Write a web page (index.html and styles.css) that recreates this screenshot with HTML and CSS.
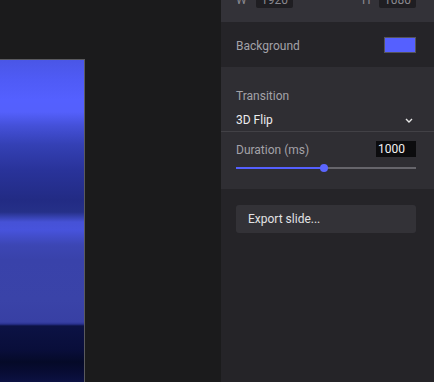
FILE: index.html
```html
<!DOCTYPE html>
<html>
<head>
<meta charset="utf-8">
<link rel="stylesheet" href="styles.css">
</head>
<body>
<div class="app">
  <div class="canvas">
    <div class="slide"></div>
  </div>
  <aside class="panel">
    <section class="size">
      <div class="size-row">
        <span class="dim-label">W</span>
        <span class="dim-field">1920</span>
        <span class="spacer"></span>
        <span class="dim-label dim-h">H</span>
        <span class="dim-field">1080</span>
      </div>
    </section>
    <section class="bg-row">
      <span class="label">Background</span>
      <span class="swatch"></span>
    </section>
    <section class="transition">
      <div class="trans-top">
        <div class="label">Transition</div>
        <div class="select">
          <span>3D Flip</span>
          <svg class="chev" width="8" height="5" viewBox="0 0 8 5"><path d="M1 1 L4 4 L7 1" fill="none" stroke="#e6e6e6" stroke-width="1.4"/></svg>
        </div>
      </div>
      <div class="trans-bottom">
        <div class="dur-row">
          <span class="label">Duration (ms)</span>
          <span class="num">1000</span>
        </div>
        <div class="slider">
          <div class="fill" style="width: 49%"></div>
          <div class="thumb" style="left: 49%"></div>
        </div>
      </div>
    </section>
    <div class="actions">
      <button class="export">Export slide...</button>
    </div>
  </aside>
</div>
</body>
</html>
```
FILE: styles.css
```css
html, body {
  margin: 0;
  padding: 0;
  background: #1b1b1c;
  font-family: Roboto, "Liberation Sans", sans-serif;
  font-size: 12px;
}
.app {
  display: flex;
  width: 434px;
  height: 382px;
  overflow: hidden;
}
.canvas {
  width: 221px;
  flex: none;
  padding-top: 59px;
  box-sizing: border-box;
  background: #1b1b1c;
}
.slide {
  width: 84px;
  height: 323px;
  border-top: 1px solid #5a5a5e;
  border-right: 1px solid #5a5a5e;
  background: linear-gradient(to bottom,
    #4a56e6 0px,
    #4f5bf6 20px,
    #5460ff 40px,
    #5460fc 52px,
    #4450d8 66px,
    #3440b4 85px,
    #29339a 110px,
    #222b84 140px,
    #253088 152px,
    #4652d6 162px,
    #4753dc 170px,
    #3c46b4 185px,
    #3942aa 200px,
    #3a43a8 240px,
    #3840a4 262px,
    #2a3290 264px,
    #0c1244 266px,
    #090e3a 290px,
    #050a28 302px,
    #080c34 312px,
    #0c1244 323px);
}
.panel {
  width: 213px;
  flex: none;
  background: #252428;
  color: #a3a2a8;
  display: flex;
  flex-direction: column;
}
.size {
  height: 22px;
  background: #333238;
  padding: 0 18px 0 15px;
  overflow: hidden;
}
.size-row {
  display: flex;
  align-items: center;
  margin-top: -8px;
  height: 16px;
}
.dim-label {
  color: #8a8990;
  font-size: 12px;
  width: 20px;
}
.dim-h { width: 17px; margin-left: -3px; }
.dim-field {
  background: #1f1e22;
  color: #8a8990;
  padding: 0 5px;
  height: 15px;
  line-height: 15px;
  border-radius: 2px;
}
.spacer { flex: 1; }
.bg-row {
  height: 45px;
  box-sizing: border-box;
  padding: 3px 18px 0 15px;
  display: flex;
  align-items: center;
  justify-content: space-between;
  background: #252428;
}
.label {
  color: #a3a2a8;
  font-size: 12px;
}
.swatch {
  width: 30px;
  height: 14px;
  margin-top: -3px;
  background: #5560ff;
  border: 1px solid #55545a;
}
.transition {
  background: #2f2e33;
  height: 122px;
  display: flex;
  flex-direction: column;
}
.trans-top {
  padding: 22px 18px 0 15px;
  height: 65px;
  box-sizing: border-box;
  border-bottom: 1px solid #424146;
}
.select {
  display: flex;
  justify-content: space-between;
  align-items: center;
  margin-top: 10px;
  color: #ececee;
}
.chev { margin-right: 3px; }
.trans-bottom {
  padding: 10px 18px 0 15px;
}
.dur-row {
  display: flex;
  justify-content: space-between;
  align-items: center;
  height: 16px;
}
.num {
  background: #0c0c0e;
  color: #f2f2f2;
  width: 40px;
  height: 16px;
  line-height: 16px;
  box-sizing: border-box;
  padding-left: 2px;
  margin-top: -2px;
}
.slider {
  position: relative;
  margin-top: 9px;
  height: 2px;
  background: #66656b;
}
.fill {
  height: 2px;
  background: #5560ff;
}
.thumb {
  position: absolute;
  top: -3px;
  width: 8px;
  height: 8px;
  margin-left: -4px;
  border-radius: 50%;
  background: #5b66ff;
}
.actions {
  padding: 16px 18px 0 15px;
}
.export {
  width: 100%;
  height: 28px;
  border: none;
  border-radius: 3px;
  background: #333237;
  color: #e2e2e4;
  font-family: Roboto, "Liberation Sans", sans-serif;
  font-size: 12px;
  text-align: left;
  padding: 0 12px;
}
```
